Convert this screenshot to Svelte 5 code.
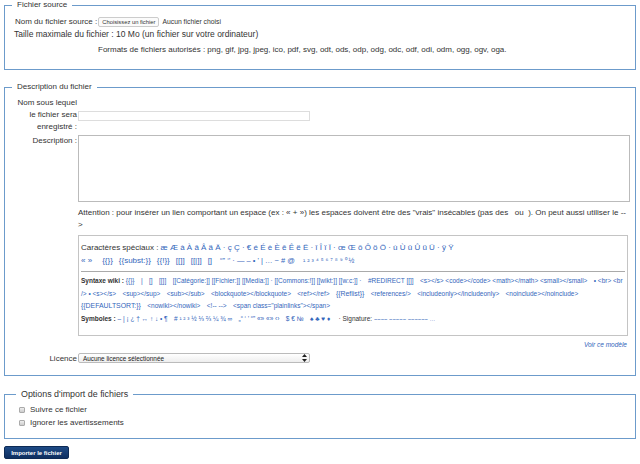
<script>
  const accents = "æ Æ à À â Â ä Ä · ç Ç · € é É è È ê Ê ë Ë · î Î ï Ï · œ Œ ô Ô ö Ö · ù Ù û Û ü Ü · ÿ Ÿ";
  const row2 = ["« »", "{{}}", "{{subst:}}", "{{!}}", "[[]]", "[[|]]", "[]"];
  const syntax = ["{{}}", "|", "[]", "[[]]", "[[Catégorie:]] [[Fichier:]] [[Media:]] · [[Commons:!]] [[wikt:]] [[w:c:]] ·", "#REDIRECT [[]]", "<s></s> <code></code> <math></math> <small></small>", "• <br> <br /> • <s></s>", "<sup></sup>", "<sub></sub>", "<blockquote></blockquote>", "<ref></ref>", "{{Reflist}}", "<references/>", "<includeonly></includeonly>", "<noinclude></noinclude>", "{{DEFAULTSORT:}}", "<nowiki></nowiki>", "<!-- -->", "<span class=\"plainlinks\"></span>"];
  const symbols = ["– | ¡ ¿ † ↔ ↑ ↓ • ¶", "# ¹ ² ³ ½ ⅓ ⅔ ¼ ¾ ∞", "„“ ‘ ’ “” «» «» ‹›", "$ € №", "♠ ♣ ♥ ♦"];

  const isTemplate = (item) => item.startsWith("{{") && item.length > 4;
</script>

<form class="page">
  <fieldset class="source">
    <legend>Fichier source</legend>
    <div class="line pick">
      Nom du fichier source :
      <button type="button" class="file-btn">Choisissez un fichier</button>
      <span class="no-file">Aucun fichier choisi</span>
    </div>
    <div class="line max">Taille maximale du fichier : 10 Mo (un fichier sur votre ordinateur)</div>
    <div class="line formats">Formats de fichiers autorisés : png, gif, jpg, jpeg, ico, pdf, svg, odt, ods, odp, odg, odc, odf, odi, odm, ogg, ogv, oga.</div>
  </fieldset>

  <fieldset class="desc">
    <legend>Description du fichier</legend>
    <div class="row name-row">
      <div class="label">Nom sous lequel<br />le fichier sera<br />enregistré :</div>
      <div class="field"><input type="text" /></div>
    </div>
    <div class="row">
      <div class="label">Description :</div>
      <div class="field">
        <textarea></textarea>
        <p class="warn">Attention : pour insérer un lien comportant un espace (ex : « + ») les espaces doivent être des "vrais" insécables (pas des &nbsp; ou &nbsp;). On peut aussi utiliser le --<br />&gt;</p>
        <div class="tools">
          <div class="chars">
            <div>Caractères spéciaux : <a href="#a">{accents}</a></div>
            <div class="links">
              {#each row2 as item}<a href="#a">{item}</a>{/each}
              <a href="#a" class="punct">“” ‘’ · — – • ' | … ~ # @</a>
              <a href="#a" class="digits">¹ ² ³ ⁴ ⁵ ⁶ ⁷ ⁸ ⁹ ⁰ ½</a>
            </div>
          </div>
          <div class="wiki">
            <div>
              <b>Syntaxe wiki :</b>
              {#each syntax as item}<a href="#a" class:big={isTemplate(item)}>{item}</a>{/each}
            </div>
            <div>
              <b>Symboles :</b>
              {#each symbols as item}<a href="#a">{item}</a>{/each}
              · Signature: <a href="#a" class="tildes">~~~~ ~~~~~ ~~~~~~ …</a>
            </div>
          </div>
        </div>
        <div class="model"><a href="#a">Voir ce modèle</a></div>
      </div>
    </div>
    <div class="row licence">
      <div class="label">Licence</div>
      <div class="field">
        <div class="select">
          <span>Aucune licence sélectionnée</span>
          <svg width="5" height="8" viewBox="0 0 5 8"><path d="M2.5 0 5 3H0zM2.5 8 0 5h5z" fill="#222" /></svg>
        </div>
      </div>
    </div>
  </fieldset>

  <fieldset class="options">
    <legend>Options d'import de fichiers</legend>
    <label><input type="checkbox" />Suivre ce fichier</label>
    <label><input type="checkbox" />Ignorer les avertissements</label>
  </fieldset>

  <button type="button" class="submit">Importer le fichier</button>
</form>

<style>
  :global(body) {
    background: #fff;
    margin: 0;
  }
  .page {
    width: 640px;
    height: 464px;
    overflow: hidden;
    box-sizing: border-box;
    padding: 0 4px;
    font-family: "Liberation Sans", Arial, sans-serif;
    font-size: 8px;
    color: #333;
  }
  fieldset {
    margin: 0;
    padding: 0 0 0 10px;
    border: 1px solid #6c9bcb;
    box-sizing: border-box;
    width: 632px;
    min-width: 0;
  }
  legend {
    margin-left: -3px;
    padding: 0 5px;
    line-height: 10px;
  }
  a {
    color: #36b;
    text-decoration: none;
  }
  .source {
    height: 70px;
  }
  .line {
    line-height: 12px;
  }
  .pick {
    margin-top: 6px;
    display: flex;
    align-items: center;
    gap: 1px;
  }
  .file-btn {
    font: 5.8px "Liberation Sans", Arial, sans-serif;
    height: 10px;
    padding: 0 3px;
    margin: 0;
    border: 1px solid #ccc;
    border-radius: 2px;
    background: #fbfbfb;
    color: #333;
    line-height: 8px;
  }
  .no-file {
    font-size: 6.8px;
    margin-left: 2px;
  }
  .max {
    font-size: 8.5px;
    margin-left: -1px;
  }
  .formats {
    margin: 4px 0 0 83px;
  }
  .desc {
    height: 294px;
    margin-top: 12px;
  }
  .row {
    display: flex;
  }
  .label {
    width: 62px;
    flex: none;
    text-align: right;
    white-space: nowrap;
    line-height: 12px;
    padding-right: 1px;
  }
  .name-row {
    margin-top: 5px;
    height: 38px;
  }
  .field {
    width: 552px;
  }
  .name-row input {
    display: block;
    box-sizing: border-box;
    width: 232px;
    height: 10px;
    margin: 14px 0 0;
    border: 1px solid #ddd;
    padding: 0;
    background: #fff;
  }
  textarea {
    display: block;
    box-sizing: border-box;
    width: 552px;
    height: 67px;
    margin: 0;
    padding: 0;
    border: 1px solid #bbb;
    resize: none;
  }
  .warn {
    margin: 5px 0 0;
    line-height: 12px;
    white-space: nowrap;
  }
  .tools {
    box-sizing: border-box;
    width: 550px;
    height: 101px;
    margin-top: 4px;
    border: 1px solid #c4c4c4;
    padding: 6px 2px 0;
  }
  .chars {
    line-height: 12px;
    padding-bottom: 4px;
    border-bottom: 1px solid #aaa;
  }
  .links {
    display: flex;
    align-items: baseline;
    gap: 6px;
    margin-top: 1px;
  }
  .links a:first-child {
    margin-right: 4px;
  }
  .punct {
    font-size: 7.5px;
    margin-left: 2px;
  }
  .digits {
    font-size: 7px;
    margin-left: 2px;
  }
  .wiki {
    font-size: 6.5px;
    line-height: 12.6px;
    margin-top: 3px;
  }
  .wiki a {
    margin-right: 6.4px;
  }
  .wiki .big {
    font-size: 6.9px;
  }
  .wiki .tildes {
    font-size: 5.8px;
  }
  .model {
    text-align: right;
    margin: 5px 3px 0 0;
    font-size: 6.5px;
    font-style: italic;
    line-height: 8px;
  }
  .licence {
    margin-top: 4px;
  }
  .select {
    box-sizing: border-box;
    width: 232px;
    height: 10px;
    border: 1px solid #bbb;
    border-radius: 2px;
    background: linear-gradient(#fff, #eee);
    display: flex;
    align-items: center;
    justify-content: space-between;
    padding: 0 2px 0 4px;
    font-size: 6.4px;
    color: #222;
  }
  .options {
    height: 50px;
    margin-top: 13px;
    padding-left: 14px;
  }
  .options legend {
    font-size: 8.9px;
  }
  .options label {
    display: flex;
    align-items: center;
    line-height: 12.5px;
    gap: 5px;
  }
  .options label:first-of-type {
    margin-top: 5px;
  }
  .options input {
    appearance: none;
    box-sizing: border-box;
    margin: 0;
    width: 6px;
    height: 6px;
    border: 1px solid #aaa;
    border-radius: 1px;
    background: linear-gradient(#eee, #ccc);
  }
  .submit {
    display: block;
    margin: 7px 0 0;
    width: 65px;
    height: 13px;
    padding: 0;
    border: 1px solid #0d2a55;
    border-radius: 2px;
    background: linear-gradient(#1e4a86, #0e2f60);
    color: #fff;
    font: bold 6px "Liberation Sans", Arial, sans-serif;
  }
</style>
